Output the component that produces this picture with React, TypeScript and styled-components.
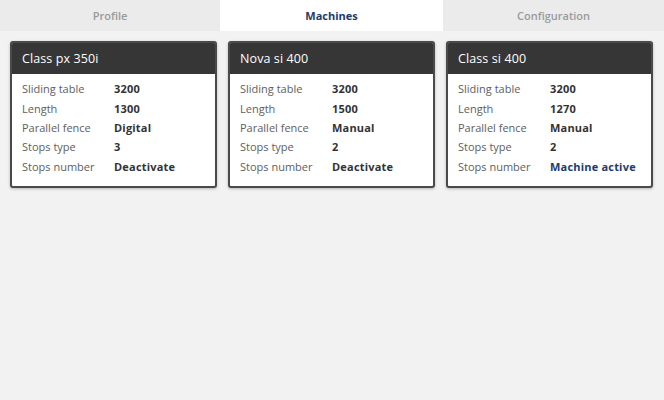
import React from "react";
import styled, { createGlobalStyle } from "styled-components";

const Global = createGlobalStyle`
  html, body { margin: 0; padding: 0; background: #f2f2f2; }
  body { font-family: "Open Sans", "Liberation Sans", sans-serif; }
  #root { min-height: 400px; }
`;

const Page = styled.div`
  width: 664px;
  height: 400px;
  background: #f2f2f2;
  display: flex;
  flex-direction: column;
`;

const TabBar = styled.div`
  display: grid;
  grid-template-columns: 220px 223px 1fr;
  height: 31px;
  background: #ebebeb;
`;

const Tab = styled.div<{ $active?: boolean }>`
  display: flex;
  align-items: center;
  justify-content: center;
  font-size: 11px;
  font-weight: ${(p) => (p.$active ? 700 : 600)};
  color: ${(p) => (p.$active ? "#1d3c6b" : "#9a9a9a")};
  background: ${(p) => (p.$active ? "#ffffff" : "#ebebeb")};
  padding-bottom: 1px;
`;

const Cards = styled.div`
  display: grid;
  grid-template-columns: repeat(3, 207px);
  gap: 11px;
  padding: 10px 10px 0;
  align-items: start;
`;

const Card = styled.div`
  background: #ffffff;
  border: 2px solid #4a4a4a;
  border-radius: 3px;
  box-shadow: 0 1px 3px rgba(0, 0, 0, 0.25);
  overflow: hidden;
`;

const CardHeader = styled.div`
  height: 31px;
  background: #363636;
  color: #ffffff;
  display: flex;
  align-items: center;
  padding: 0 10px;
  font-size: 12.5px;
  letter-spacing: 0.1px;
`;

const Rows = styled.div`
  display: flex;
  flex-direction: column;
  padding: 5px 10px 10px;
`;

const Row = styled.div`
  display: grid;
  grid-template-columns: 92px 1fr;
  height: 19.4px;
  align-items: center;
  font-size: 11px;
`;

const Label = styled.span`
  color: #5e5e5e;
`;

const Value = styled.span<{ $accent?: boolean }>`
  font-weight: 700;
  letter-spacing: 0.2px;
  color: ${(p) => (p.$accent ? "#1d3c6b" : "#333333")};
`;

type Machine = {
  name: string;
  rows: [string, string][];
  active?: boolean;
};

const machines: Machine[] = [
  {
    name: "Class px 350i",
    rows: [
      ["Sliding table", "3200"],
      ["Length", "1300"],
      ["Parallel fence", "Digital"],
      ["Stops type", "3"],
      ["Stops number", "Deactivate"],
    ],
  },
  {
    name: "Nova si 400",
    rows: [
      ["Sliding table", "3200"],
      ["Length", "1500"],
      ["Parallel fence", "Manual"],
      ["Stops type", "2"],
      ["Stops number", "Deactivate"],
    ],
  },
  {
    name: "Class si 400",
    active: true,
    rows: [
      ["Sliding table", "3200"],
      ["Length", "1270"],
      ["Parallel fence", "Manual"],
      ["Stops type", "2"],
      ["Stops number", "Machine active"],
    ],
  },
];

export default function App() {
  return (
    <Page>
      <Global />
      <TabBar>
        <Tab>Profile</Tab>
        <Tab $active>Machines</Tab>
        <Tab>Configuration</Tab>
      </TabBar>
      <Cards>
        {machines.map((m) => (
          <Card key={m.name}>
            <CardHeader>{m.name}</CardHeader>
            <Rows>
              {m.rows.map(([label, value], i) => (
                <Row key={label}>
                  <Label>{label}</Label>
                  <Value $accent={m.active && i === m.rows.length - 1}>{value}</Value>
                </Row>
              ))}
            </Rows>
          </Card>
        ))}
      </Cards>
    </Page>
  );
}
